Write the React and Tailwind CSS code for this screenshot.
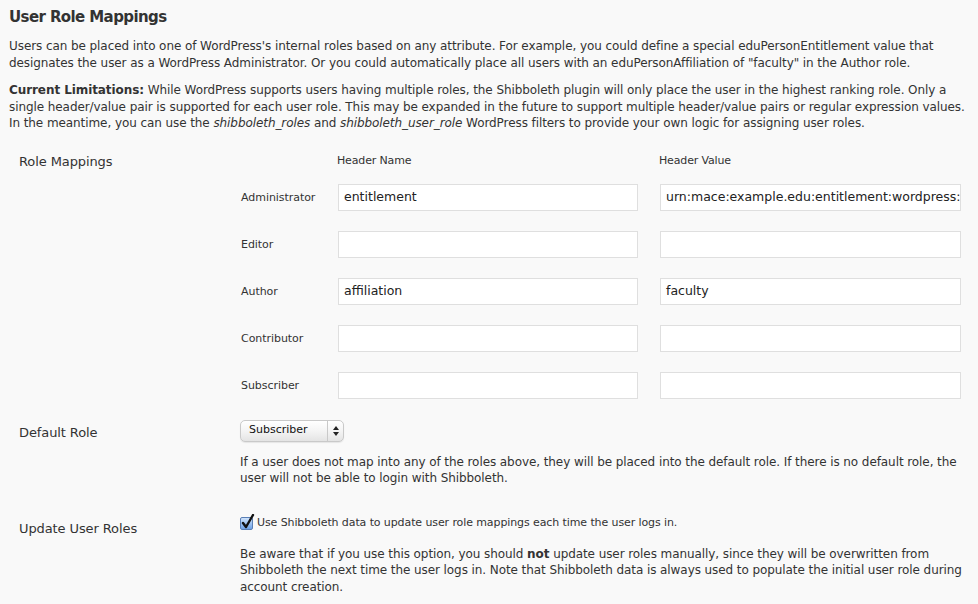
import React from "react";

const font = { fontFamily: '"DejaVu Sans", "Liberation Sans", sans-serif' };

function Field({ value }) {
  return (
    <div className="h-[27px] border border-[#dfdfdf] bg-white pl-[5px] flex items-center overflow-hidden whitespace-nowrap text-[12.5px] text-[#222]">
      {value}
    </div>
  );
}

function Row({ label, name, value }) {
  return (
    <>
      <div className="h-[27px] flex items-center text-[11px] pl-[1px] tracking-[-0.05px] pt-[2px]">{label}</div>
      <Field value={name} />
      <Field value={value} />
    </>
  );
}

function Select() {
  return (
    <div className="w-[104px] h-[22px] rounded-[5px] border border-[#c9c9c9] bg-gradient-to-b from-[#ffffff] via-[#f4f4f4] to-[#e4e4e4] flex items-stretch shadow-[0_1px_1px_rgba(0,0,0,0.08)]">
      <div className="flex-1 flex items-center pl-[8px] text-[11px] text-[#111]">Subscriber</div>
      <div className="w-[16px] border-l border-[#c9c9c9] flex items-center justify-center">
        <svg width="6" height="10" viewBox="0 0 6 10">
          <path d="M0 4 L3 0 L6 4 Z" fill="#222" />
          <path d="M0 6 L3 10 L6 6 Z" fill="#222" />
        </svg>
      </div>
    </div>
  );
}

function Checkbox() {
  return (
    <div className="relative w-[13px] h-[13px] rounded-[2px] border border-[#5a7fb5] bg-gradient-to-b from-[#cfe3fb] to-[#6fa2e6] shrink-0">
      <svg className="absolute -top-[4px] left-[0px]" width="14" height="16" viewBox="0 0 14 16">
        <path d="M2 9 L5 13 L12 1" fill="none" stroke="#111" strokeWidth="2.4" strokeLinecap="round" strokeLinejoin="round" />
      </svg>
    </div>
  );
}

export default function App() {
  return (
    <div className="min-h-screen bg-[#f9f9f9] text-[#333] pl-[9px]" style={font}>
      <h3 className="pt-[5px] text-[15px] font-bold leading-[24px] tracking-[-0.6px]">User Role Mappings</h3>
      <div className="text-[12px] tracking-[-0.08px] leading-[16.5px] whitespace-nowrap">
        <p className="mt-[9px]">
          Users can be placed into one of WordPress's internal roles based on any attribute. For example, you could define a special eduPersonEntitlement value that
          <br />
          designates the user as a WordPress Administrator. Or you could automatically place all users with an eduPersonAffiliation of "faculty" in the Author role.
        </p>
        <p className="mt-[11px]">
          <b>Current Limitations:</b> While WordPress supports users having multiple roles, the Shibboleth plugin will only place the user in the highest ranking role. Only a
          <br />
          single header/value pair is supported for each user role. This may be expanded in the future to support multiple header/value pairs or regular expression values.
          <br />
          In the meantime, you can use the <i>shibboleth_roles</i> and <i>shibboleth_user_role</i> WordPress filters to provide your own logic for assigning user roles.
        </p>
      </div>

      <div className="flex mt-[20px]">
        <div className="w-[231px] pl-[10px] text-[13px] leading-[20px] tracking-[-0.1px]">Role Mappings</div>
        <div className="flex flex-col">
          <div className="flex text-[11px] leading-[17px] tracking-[-0.15px]">
            <div className="w-[97px]" />
            <div className="w-[322px]">Header Name</div>
            <div>Header Value</div>
          </div>
          <div className="mt-[15px] grid grid-cols-[76px_300px_301px] gap-x-[22px] gap-y-[20px]">
            <Row label="Administrator" name="entitlement" value="urn:mace:example.edu:entitlement:wordpress:admin" />
            <Row label="Editor" name="" value="" />
            <Row label="Author" name="affiliation" value="faculty" />
            <Row label="Contributor" name="" value="" />
            <Row label="Subscriber" name="" value="" />
          </div>
        </div>
      </div>

      <div className="flex mt-[21px]">
        <div className="w-[231px] pl-[10px] pt-[3px] text-[13px] leading-[20px] tracking-[-0.1px]">Default Role</div>
        <div className="flex flex-col">
          <Select />
          <p className="mt-[12px] text-[12px] tracking-[-0.08px] leading-[16.5px] whitespace-nowrap">
            If a user does not map into any of the roles above, they will be placed into the default role. If there is no default role, the
            <br />
            user will not be able to login with Shibboleth.
          </p>
        </div>
      </div>

      <div className="flex mt-[28px]">
        <div className="w-[231px] pl-[10px] pt-[4px] text-[13px] leading-[20px] tracking-[-0.1px]">Update User Roles</div>
        <div className="flex flex-col">
          <label className="flex items-center gap-[4px] h-[17px] text-[11px] tracking-[-0.1px]">
            <Checkbox />
            <span>Use Shibboleth data to update user role mappings each time the user logs in.</span>
          </label>
          <p className="mt-[14px] text-[12px] tracking-[-0.08px] leading-[16.5px] whitespace-nowrap">
            Be aware that if you use this option, you should <b>not</b> update user roles manually, since they will be overwritten from
            <br />
            Shibboleth the next time the user logs in. Note that Shibboleth data is always used to populate the initial user role during
            <br />
            account creation.
          </p>
        </div>
      </div>
    </div>
  );
}
